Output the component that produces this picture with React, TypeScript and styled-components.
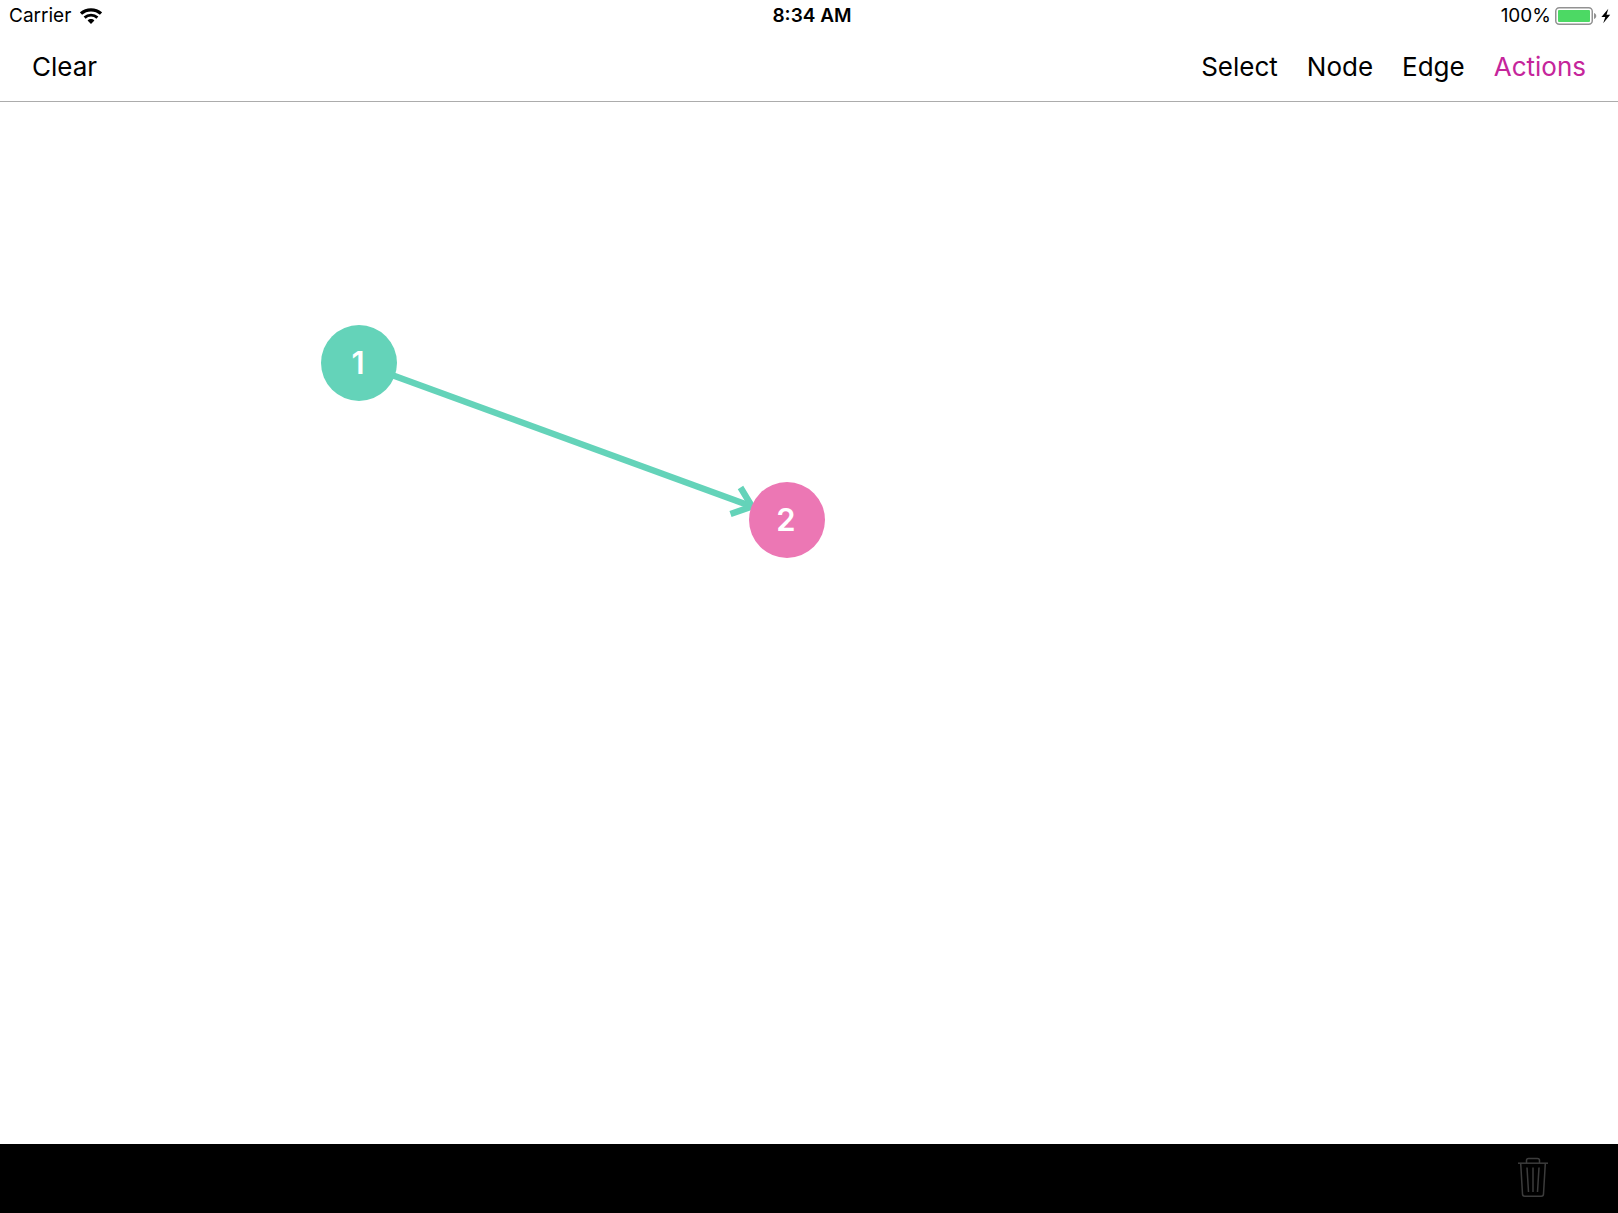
import React from 'react';
import styled, { createGlobalStyle } from 'styled-components';

const TEAL = '#64d3b9';
const PINK = '#ec77b4';
const CANVAS_TOP = 102;
const NODE_RADIUS = 38;

const GlobalStyle = createGlobalStyle`
  *, *::before, *::after { box-sizing: border-box; }
  body { margin: 0; background: #fff; }
`;

const Screen = styled.div`
  display: flex;
  flex-direction: column;
  min-height: 100vh;
  background: #fff;
  color: #000;
  font-family: Inter, 'Liberation Sans', sans-serif;
`;

const StatusBar = styled.header`
  display: grid;
  grid-template-columns: 1fr auto 1fr;
  align-items: center;
  height: 32px;
  padding: 0 3px 0 9px;
  font-size: 19px;
  line-height: 24px;
`;

const StatusGroup = styled.div<{ $align: 'start' | 'end'; $gap: number }>`
  display: flex;
  align-items: center;
  justify-content: ${({ $align }) => `flex-${$align}`};
  gap: ${({ $gap }) => $gap}px;
`;

const Clock = styled.time`
  font-weight: 600;
`;

const Toolbar = styled.nav`
  display: flex;
  align-items: center;
  justify-content: space-between;
  height: 70px;
  padding: 0 32px;
  border-bottom: 1px solid #acacac;
`;

const ToolGroup = styled.div`
  display: flex;
  gap: 29px;
`;

const ToolButton = styled.button<{ $accent?: boolean }>`
  padding: 0;
  border: 0;
  background: none;
  color: ${({ $accent }) => ($accent ? '#c5259b' : '#000')};
  font-family: inherit;
  font-size: 26px;
  line-height: 32px;
  cursor: pointer;
`;

const Canvas = styled.main`
  position: relative;
  flex: 1;
  overflow: hidden;
`;

const EdgeLayer = styled.svg`
  position: absolute;
  inset: 0;
  width: 100%;
  height: 100%;
`;

const GraphNode = styled.button<{ $x: number; $y: number; $color: string }>`
  position: absolute;
  left: ${({ $x }) => $x - NODE_RADIUS}px;
  top: ${({ $y }) => $y - NODE_RADIUS}px;
  width: ${NODE_RADIUS * 2}px;
  height: ${NODE_RADIUS * 2}px;
  padding: 0 2px 0 0;
  border: 0;
  border-radius: 50%;
  background: ${({ $color }) => $color};
  color: #fff;
  font-family: inherit;
  font-size: 31px;
  font-weight: 600;
  line-height: 38px;
  cursor: pointer;
`;

const BottomBar = styled.footer`
  display: flex;
  align-items: center;
  justify-content: flex-end;
  height: 69px;
  padding: 0 68px 4px;
  background: #000;
`;

const IconButton = styled.button`
  display: flex;
  padding: 0;
  border: 0;
  background: none;
  color: #3c3c3c;
`;

const WifiIcon = () => (
  <svg width="22" height="16" viewBox="0 0 22 16" fill="none" stroke="#000" role="img" aria-label="Wi-Fi">
    <path d="M1 5.600C6.600 .5 15.400 .5 21 5.600" strokeWidth="3.200" />
    <path d="M4.600 9.600c3.600-3.300 9.200-3.300 12.800 0" strokeWidth="2.900" />
    <path d="M7.600 12.500c1.900-1.900 4.900-1.900 6.800 0L11 16z" fill="#000" stroke="none" />
  </svg>
);

const BatteryIcon = () => (
  <svg width="42" height="18" viewBox="0 0 42 18" role="img" aria-label="Battery charging">
    <rect x=".75" y=".75" width="36.500" height="16.500" rx="3.500" fill="#fff" stroke="#929292" strokeWidth="1.500" />
    <rect x="3" y="3" width="32" height="12" rx="1" fill="#4cd964" />
    <path d="M39 6c3 .8 3 5.200 0 6z" fill="#929292" />
  </svg>
);

const BoltIcon = () => (
  <svg width="14" height="16" viewBox="0 0 14 16" aria-hidden="true">
    <path d="M7.300 .8 .4 9h3.900L2.200 15.200 9.200 6.700H5.500z" fill="#000" />
  </svg>
);

const TrashIcon = () => (
  <svg width="34" height="42" viewBox="0 0 34 42" fill="none" stroke="currentColor" strokeWidth="1.500" aria-hidden="true">
    <path d="M2 7.200h30" />
    <path d="M10.500 7V4.500a2 2 0 0 1 2-2h9a2 2 0 0 1 2 2V7" />
    <path d="M4.700 7.500 6.500 38a2.200 2.200 0 0 0 2.200 2.200h16.600A2.200 2.200 0 0 0 27.500 38L29.300 7.500" />
    <path d="M11 11.500 12.500 36M17 11.500V36M23 11.500 21.500 36" />
  </svg>
);

const nodes = [
  { label: '1', x: 359, y: 363 - CANVAS_TOP, color: TEAL },
  { label: '2', x: 787, y: 520 - CANVAS_TOP, color: PINK },
];

export default function App() {
  const [from] = nodes;
  return (
    <Screen>
      <GlobalStyle />
      <StatusBar>
        <StatusGroup $align="start" $gap={9}>
          <span>Carrier</span>
          <WifiIcon />
        </StatusGroup>
        <Clock>8:34 AM</Clock>
        <StatusGroup $align="end" $gap={4}>
          <span>100%</span>
          <BatteryIcon />
          <BoltIcon />
        </StatusGroup>
      </StatusBar>
      <Toolbar>
        <ToolButton type="button">Clear</ToolButton>
        <ToolGroup>
          <ToolButton type="button">Select</ToolButton>
          <ToolButton type="button">Node</ToolButton>
          <ToolButton type="button">Edge</ToolButton>
          <ToolButton type="button" $accent>Actions</ToolButton>
        </ToolGroup>
      </Toolbar>
      <Canvas>
        <EdgeLayer fill="none" stroke={TEAL} strokeWidth="6.400" aria-hidden="true">
          <path d={`M${from.x} ${from.y}L752 404.500`} />
          <path d="M740.500 385.500 752 404.500 730.500 412" />
        </EdgeLayer>
        {nodes.map((node) => (
          <GraphNode key={node.label} type="button" $x={node.x} $y={node.y} $color={node.color}>
            {node.label}
          </GraphNode>
        ))}
      </Canvas>
      <BottomBar>
        <IconButton type="button" aria-label="Delete">
          <TrashIcon />
        </IconButton>
      </BottomBar>
    </Screen>
  );
}
